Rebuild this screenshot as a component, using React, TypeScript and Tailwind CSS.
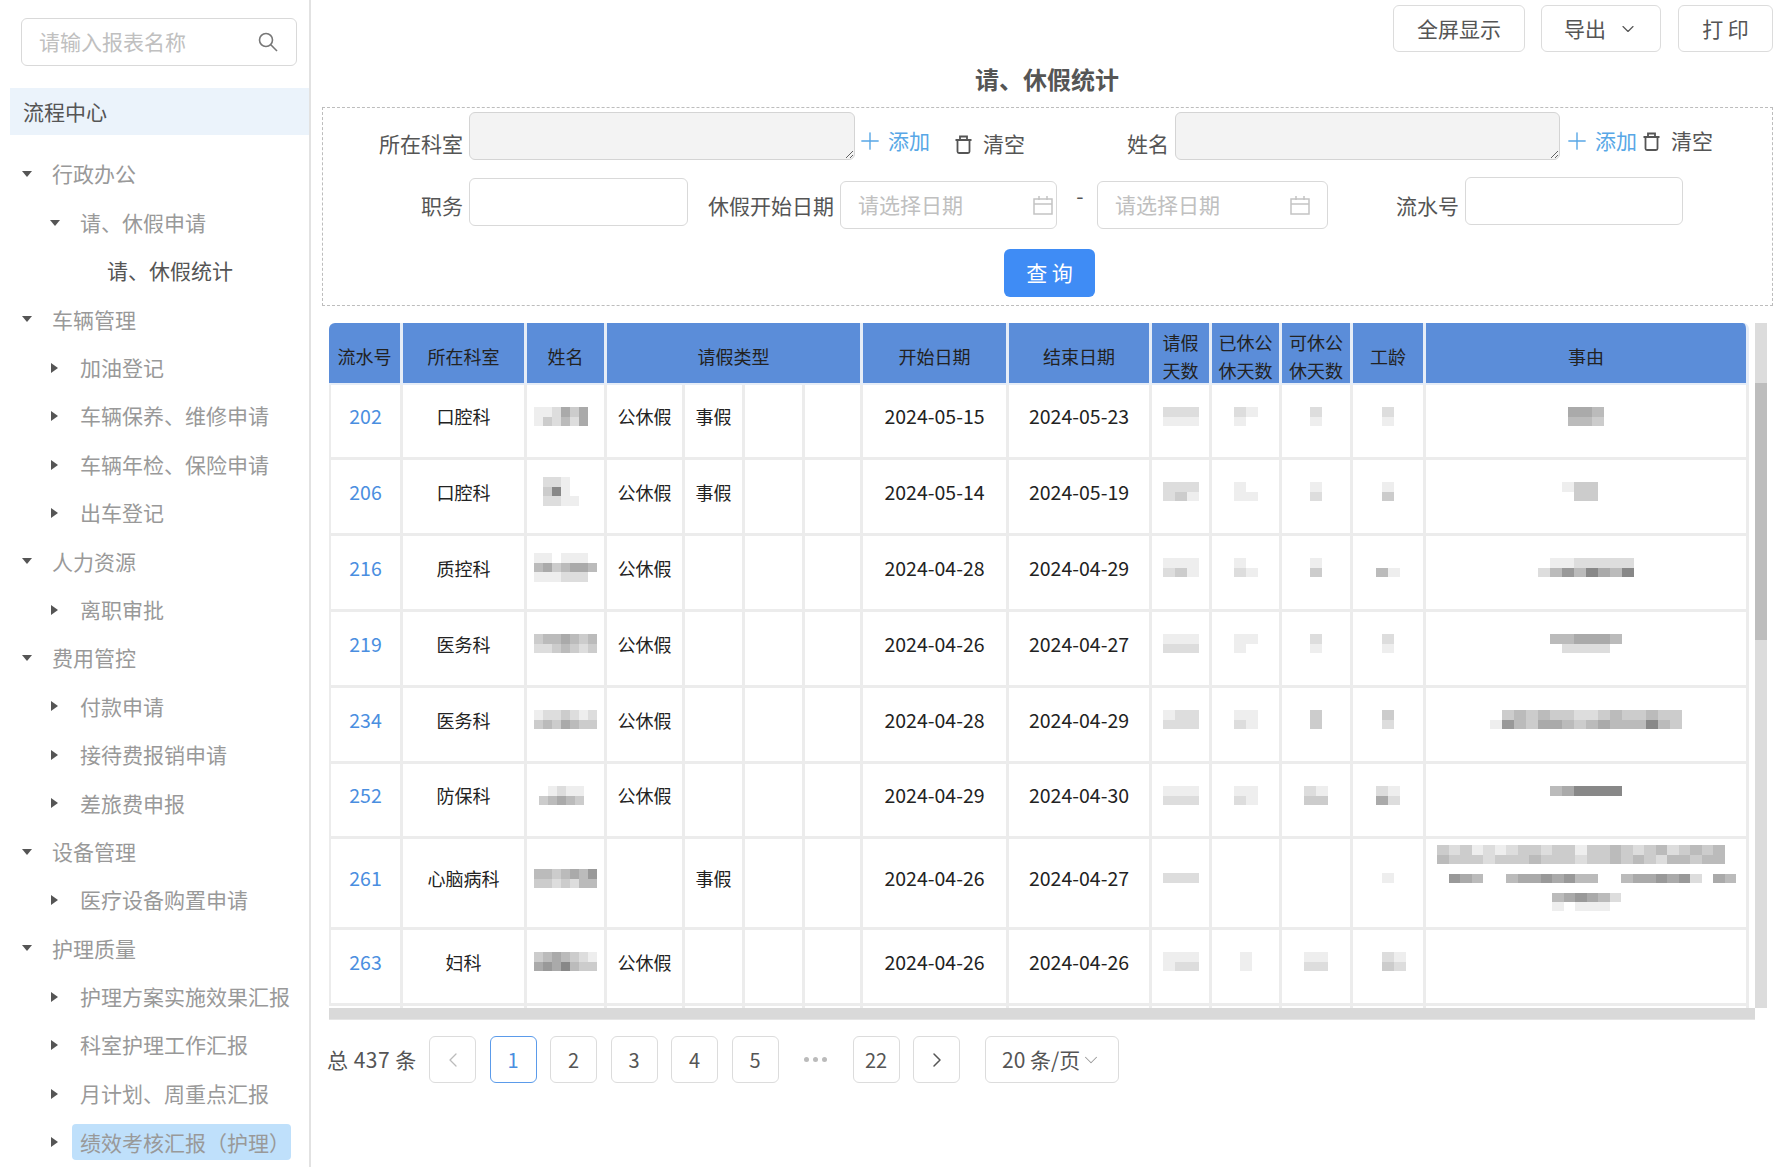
import { ChevronDown, ChevronLeft, ChevronRight, Plus } from 'lucide-react';
import type { ReactNode } from 'react';

type TreeItem = { label: string; level: 1 | 2 | 3; open?: boolean; active?: boolean; current?: boolean };

const tree: TreeItem[] = [
  { label: '行政办公', level: 1, open: true },
  { label: '请、休假申请', level: 2, open: true },
  { label: '请、休假统计', level: 3, current: true },
  { label: '车辆管理', level: 1, open: true },
  { label: '加油登记', level: 2 },
  { label: '车辆保养、维修申请', level: 2 },
  { label: '车辆年检、保险申请', level: 2 },
  { label: '出车登记', level: 2 },
  { label: '人力资源', level: 1, open: true },
  { label: '离职审批', level: 2 },
  { label: '费用管控', level: 1, open: true },
  { label: '付款申请', level: 2 },
  { label: '接待费报销申请', level: 2 },
  { label: '差旅费申报', level: 2 },
  { label: '设备管理', level: 1, open: true },
  { label: '医疗设备购置申请', level: 2 },
  { label: '护理质量', level: 1, open: true },
  { label: '护理方案实施效果汇报', level: 2 },
  { label: '科室护理工作汇报', level: 2 },
  { label: '月计划、周重点汇报', level: 2 },
  { label: '绩效考核汇报（护理）', level: 2, active: true },
];

// redacted cells: each char is a grey level, '.' is empty
type Row = {
  id: string;
  dept: string;
  name: string[];
  gong: boolean;
  shi: boolean;
  start: string;
  end: string;
  nums: string[][];
  reason: string[];
  h: string;
};

const rows: Row[] = [
  {
    id: '202', dept: '口腔科', name: ['eedacaf', 'ecdbda.'], gong: true, shi: true, start: '2024-05-15', end: '2024-05-23',
    nums: [['ddd', 'eee'], ['de', 'ef'], ['d', 'e'], ['d', 'e']], reason: ['aab', 'bbc'], h: 'h-[75px]',
  },
  {
    id: '206', dept: '口腔科', name: ['ddef.', 'c8ef.', 'ddeef'], gong: true, shi: true, start: '2024-05-14', end: '2024-05-19',
    nums: [['ddd', 'dce'], ['ef', 'ee'], ['e', 'd'], ['e', 'c']], reason: ['eccf', 'fccf'], h: 'h-[76px]',
  },
  {
    id: '216', dept: '质控科', name: ['eefeee.', 'bacbaab', 'eeeddd.'], gong: true, shi: false, start: '2024-04-28', end: '2024-04-29',
    nums: [['eee', 'dce'], ['ef', 'de'], ['e', 'c'], ['ff', 'be']], reason: ['feeddddd', 'db9b8ab8'], h: 'h-[76px]',
  },
  {
    id: '219', dept: '医务科', name: ['cbbabcb', 'ddcbcdc'], gong: true, shi: false, start: '2024-04-26', end: '2024-04-27',
    nums: [['eee', 'ddd'], ['ee', 'ef'], ['d', 'e'], ['d', 'e']], reason: ['bbaaab', 'fddddf'], h: 'h-[76px]',
  },
  {
    id: '234', dept: '医务科', name: ['eddcded', 'cbcabcc'], gong: true, shi: false, start: '2024-04-28', end: '2024-04-29',
    nums: [['edd', 'ddd'], ['ee', 'de'], ['c', 'c'], ['c', 'd']], reason: ['fcbcbccddcbccbcc', 'e9bcaabcbabbb8bc'], h: 'h-[76px]',
  },
  {
    id: '252', dept: '防保科', name: ['.edeef', 'cbabcf'], gong: true, shi: false, start: '2024-04-29', end: '2024-04-30',
    nums: [['eee', 'ddd'], ['ee', 'de'], ['de', 'cc'], ['de', 'ad']], reason: ['ba8888', 'ffffff'], h: 'h-[75px]',
  },
  {
    id: '261', dept: '心脑病科', name: ['bbcbab9', 'ccdcdbb'], gong: false, shi: true, start: '2024-04-26', end: '2024-04-27',
    nums: [['ddd'], [], [], ['e']],
    reason: [
      'cdcededccdcceccbcdcbdcbcb',
      'bcccdcccbcccdccbcbcdbbcbb',
      '.........................',
      '.9ab.fbaa9a9bbffbaa9a9dfab',
      '.........................',
      '..........ba9abd..........',
      '..........efeeef..........',
    ],
    h: 'h-[91px]',
  },
  {
    id: '263', dept: '妇科', name: ['cbabcde', 'a9a8bcc'], gong: true, shi: false, start: '2024-04-26', end: '2024-04-26',
    nums: [['eee', 'edd'], ['e', 'e'], ['ee', 'dd'], ['fde', 'fcd']], reason: [], h: 'h-[76px]',
  },
];

function Mosaic({ cells, w = 12, h = 9.5 }: { cells: string[]; w?: number; h?: number }) {
  if (cells.length === 0) return null;
  const cols = Math.max(...cells.map((r) => r.length));
  return (
    <svg width={cols * w} height={cells.length * h} shapeRendering="crispEdges" className="block">
      {cells.map((r, y) =>
        r.split('').map((c, x) =>
          c === '.' ? null : (
            <rect key={x + '-' + y} x={x * w} y={y * h} width={w} height={h} fill={'#' + c + c + c + c + c + c} />
          ),
        ),
      )}
    </svg>
  );
}

function Caret({ open }: { open?: boolean }) {
  return open ? (
    <svg width="10" height="6" viewBox="0 0 10 6" className="block">
      <path d="M0 0h10L5 6z" fill="#555" />
    </svg>
  ) : (
    <svg width="7" height="10" viewBox="0 0 7 10" className="ml-[1px] block">
      <path d="M0 0v10l7-5z" fill="#555" />
    </svg>
  );
}

function TreeRow({ item }: { item: TreeItem }) {
  const pad = item.level === 1 ? 'pl-[12px]' : item.level === 2 ? 'pl-[40px]' : 'pl-[97px]';
  return (
    <div className={'flex h-[48.4px] items-center ' + pad}>
      {item.level < 3 && (
        <span className="flex w-[30px] shrink-0 items-center">
          <Caret open={item.open} />
        </span>
      )}
      {item.active ? (
        <span className="-ml-[8px] h-[36px] w-[219px] whitespace-nowrap rounded-[4px] bg-[#bfe0fb] px-[8px] leading-[36px] text-[#999]">
          {item.label}
        </span>
      ) : (
        <span className={item.current ? 'whitespace-nowrap text-[#555]' : 'whitespace-nowrap text-[#999]'}>{item.label}</span>
      )}
    </div>
  );
}

function SearchIcon() {
  return (
    <svg width="20" height="20" viewBox="0 0 20 20" fill="none" stroke="#777" strokeWidth="1.6" className="block">
      <circle cx="8" cy="8" r="6.5" />
      <path d="M12.8 12.8L19 19" />
    </svg>
  );
}

function Sidebar() {
  return (
    <aside className="w-[311px] shrink-0 pl-[10px]">
      <div className="h-full border-r-2 border-[#e2e2e2] pt-[18px]">
        <div className="ml-[11px] flex h-[48px] w-[276px] items-center justify-between rounded-[6px] border-[1.5px] border-[#d9d9d9] pl-[17px] pr-[18px] text-[#c0c0c0]">
          <span>请输入报表名称</span>
          <SearchIcon />
        </div>
        <div className="mt-[22px] flex h-[47px] items-center bg-[#ebf3fb] pl-[13px] text-[#555]">流程中心</div>
        <div className="mt-[15px]">
          {tree.map((item) => (
            <TreeRow key={item.label} item={item} />
          ))}
        </div>
      </div>
    </aside>
  );
}

function CalendarIcon() {
  return (
    <svg width="20" height="19" viewBox="0 0 20 19" fill="none" stroke="#c4c4c4" strokeWidth="1.5" className="block">
      <path d="M1 3h18v15H1zM1 8h18M6 0v4M14 0v4" />
    </svg>
  );
}

function TrashIcon() {
  return (
    <svg width="17" height="19" viewBox="0 0 17 19" fill="none" stroke="#555" strokeWidth="1.8" className="block">
      <path d="M0.5 5h16M5 5V1.5h7V5M2.5 5v11.5a1.5 1.5 0 0 0 1.5 1.5h9a1.5 1.5 0 0 0 1.5-1.5V5" />
    </svg>
  );
}

function AddLink({ className }: { className: string }) {
  return (
    <span className={'flex items-center text-[#58a7e6] ' + className}>
      <Plus size={28} strokeWidth={1.2} className="-ml-[5px] mr-[4px]" />
      添加
    </span>
  );
}

function ClearLink({ className }: { className: string }) {
  return (
    <span className={'flex items-center gap-[11px] text-[#555] ' + className}>
      <TrashIcon />
      清空
    </span>
  );
}

function DateBox({ className }: { className: string }) {
  return (
    <div className={'flex h-[48px] items-center justify-between rounded-[6px] border-[1.5px] border-[#d9d9d9] pl-[17px] text-[#c0c0c0] ' + className}>
      <span>请选择日期</span>
      <CalendarIcon />
    </div>
  );
}

function FilterForm() {
  const area = 'block h-[48px] rounded-[6px] border-[1.5px] border-[#d4d4d4] bg-[#f3f3f3] outline-none';
  const input = 'block h-[48px] rounded-[6px] border-[1.5px] border-[#d9d9d9] bg-white outline-none';
  const label = 'flex h-[48px] items-center justify-end text-[#555]';
  return (
    <div className="ml-[11px] mt-[11px] h-[199px] w-[1451px] border border-dashed border-[#bdbdbd] pt-[4px]">
      <div className="flex items-start">
        <span className={label + ' mt-[8px] w-[140px]'}>所在科室</span>
        <textarea readOnly className={area + ' ml-[6px] w-[386px]'} />
        <AddLink className="ml-[6px] mt-[5px] h-[48px] w-[94px]" />
        <ClearLink className="mt-[8px] h-[48px] w-[72px]" />
        <span className={label + ' mt-[8px] w-[142px]'}>姓名</span>
        <textarea readOnly className={area + ' ml-[6px] w-[385px]'} />
        <AddLink className="ml-[8px] mt-[5px] h-[48px] w-[75px]" />
        <ClearLink className="mt-[5px] h-[48px]" />
      </div>
      <div className="mt-[9px] flex items-start">
        <span className={label + ' mt-[5px] w-[140px]'}>职务</span>
        <input className={input + ' ml-[6px] mt-[1px] w-[219px]'} />
        <span className={label + ' mt-[5px] w-[146px] whitespace-nowrap'}>休假开始日期</span>
        <DateBox className="ml-[6px] mt-[4px] w-[217px] pr-[3px]" />
        <span className="flex h-[37px] w-[40px] items-center justify-center pl-[6px] text-[#555]">-</span>
        <DateBox className="mt-[4px] w-[231px] pr-[17px]" />
        <span className={label + ' mt-[5px] w-[131px]'}>流水号</span>
        <input className={input + ' ml-[6px] w-[218px]'} />
      </div>
      <button className="ml-[681px] mt-[19px] block h-[48px] w-[91px] rounded-[6px] bg-[#3f8cf5] text-white">查 询</button>
    </div>
  );
}

const th = 'h-[62px] border-b-2 border-r-[3px] border-[#e6edf7] bg-[#5b8dd9] p-0 text-center font-normal text-[#222]';
const td = 'border-b-[3px] border-r-[3px] border-[#ececec] pb-[10px] text-center align-middle';

function Center({ children }: { children?: ReactNode }) {
  return <div className="flex items-center justify-center">{children}</div>;
}

// header labels sit a little below the middle of the row and may overflow it
function HeadLabel({ children }: { children: ReactNode }) {
  return (
    <div className="flex h-[60px] items-center justify-center">
      <div className="translate-y-[3px]">{children}</div>
    </div>
  );
}

function DataTable() {
  const widths = ['w-[74px]', 'w-[124px]', 'w-[80px]', 'w-[78px]', 'w-[60px]', 'w-[60px]', 'w-[58px]', 'w-[146px]', 'w-[143px]', 'w-[60px]', 'w-[70px]', 'w-[71px]', 'w-[73px]', 'w-[323px]'];
  return (
    <div className="ml-[18px] mt-[17px] w-[1448px]">
      <div className="flex h-[685px] items-start">
        <div className="h-full w-[1426px] overflow-hidden">
          <table className="w-[1420px] table-fixed border-separate border-spacing-0 text-[18px] leading-[28px] text-[#222]">
            <colgroup>
              {widths.map((w, i) => (
                <col key={i} className={w} />
              ))}
            </colgroup>
            <thead>
              <tr>
                <th className={th + ' rounded-tl-[6px]'}><HeadLabel>流水号</HeadLabel></th>
                <th className={th}><HeadLabel>所在科室</HeadLabel></th>
                <th className={th}><HeadLabel>姓名</HeadLabel></th>
                <th className={th} colSpan={4}><HeadLabel>请假类型</HeadLabel></th>
                <th className={th}><HeadLabel>开始日期</HeadLabel></th>
                <th className={th}><HeadLabel>结束日期</HeadLabel></th>
                <th className={th}><HeadLabel>请假<br />天数</HeadLabel></th>
                <th className={th}><HeadLabel>已休公<br />休天数</HeadLabel></th>
                <th className={th}><HeadLabel>可休公<br />休天数</HeadLabel></th>
                <th className={th}><HeadLabel>工龄</HeadLabel></th>
                <th className={th + ' rounded-tr-[6px] border-r-0'}><HeadLabel>事由</HeadLabel></th>
              </tr>
            </thead>
            <tbody>
              {rows.map((r) => (
                <tr key={r.id} className={r.h}>
                  <td className={td + ' border-l-2 text-[19.5px] text-[#4a8ee0]'}>{r.id}</td>
                  <td className={td}>{r.dept}</td>
                  <td className={td}>
                    <Center><Mosaic cells={r.name} w={9} h={9.5} /></Center>
                  </td>
                  <td className={td}>{r.gong ? '公休假' : ''}</td>
                  <td className={td}>{r.shi ? '事假' : ''}</td>
                  <td className={td} />
                  <td className={td} />
                  <td className={td + ' text-[19.5px]'}>{r.start}</td>
                  <td className={td + ' text-[19.5px]'}>{r.end}</td>
                  {r.nums.map((n, i) => (
                    <td key={i} className={td}>
                      <Center><Mosaic cells={n} /></Center>
                    </td>
                  ))}
                  <td className={td + ' border-r-0'}>
                    <Center><Mosaic cells={r.reason} w={r.reason.length > 4 ? 11.5 : 12} /></Center>
                  </td>
                </tr>
              ))}
              <tr className="h-[40px]">
                {widths.map((_, i) => (
                  <td key={i} className={td} />
                ))}
              </tr>
            </tbody>
          </table>
        </div>
        <div className="ml-[-0.5px] h-full w-[12px] bg-[#dcdcdc]">
          <div className="mt-[60px] h-[257px] bg-[#bdbdbd]" />
        </div>
      </div>
      <div className="h-[12px] w-[1426px] border-b border-[#e5e5e5] bg-[#d9d9d9]" />
    </div>
  );
}

function PageButton({ children, active }: { children: ReactNode; active?: boolean }) {
  return (
    <span
      className={
        'flex h-[47px] w-[47px] items-center justify-center rounded-[6px] border-[1.5px] ' +
        (active ? 'border-[#5b9bea] text-[#4a8ee0]' : 'border-[#dcdcdc] text-[#555]')
      }
    >
      {children}
    </span>
  );
}

function Pagination() {
  return (
    <div className="ml-[16px] mt-[16px] flex h-[47px] items-center text-[20px] text-[#555]">
      <span className="w-[102px] whitespace-nowrap text-[21px] tracking-[0.5px]">总 437 条</span>
      <div className="flex gap-[13.5px]">
        <PageButton><ChevronLeft size={24} strokeWidth={1.3} className="text-[#bbb]" /></PageButton>
        <PageButton active>1</PageButton>
        <PageButton>2</PageButton>
        <PageButton>3</PageButton>
        <PageButton>4</PageButton>
        <PageButton>5</PageButton>
      </div>
      <span className="flex w-[74px] items-center justify-center gap-[4px]">
        <span className="h-[5px] w-[5px] rounded-full bg-[#bbb]" />
        <span className="h-[5px] w-[5px] rounded-full bg-[#bbb]" />
        <span className="h-[5px] w-[5px] rounded-full bg-[#bbb]" />
      </span>
      <span className="flex gap-[13.5px]">
        <PageButton>22</PageButton>
        <PageButton><ChevronRight size={24} strokeWidth={1.5} /></PageButton>
      </span>
      <span className="ml-[25px] flex h-[47px] w-[134px] items-center whitespace-nowrap rounded-[6px] border-[1.5px] border-[#dcdcdc] pl-[16px] text-[21px]">
        20 条/页
        <ChevronDown size={22} strokeWidth={1.1} className="text-[#999]" />
      </span>
    </div>
  );
}

export default function App() {
  const tool = 'flex h-[47px] items-center justify-center rounded-[6px] border-[1.5px] border-[#dcdcdc] text-[#555]';
  return (
    <div className="flex h-[1167px] w-[1777px] overflow-hidden bg-white font-['Noto_Sans_CJK_SC','Noto_Sans',sans-serif] text-[21px]">
      <Sidebar />
      <main className="min-w-0 flex-1 pt-[5px]">
        <div className="flex justify-end pr-[4px]">
          <span className={tool + ' w-[132px]'}>全屏显示</span>
          <span className={tool + ' ml-[16px] w-[120px] gap-[12px]'}>
            导出
            <ChevronDown size={20} strokeWidth={1.4} />
          </span>
          <span className={tool + ' ml-[17px] w-[95px]'}>打 印</span>
        </div>
        <h1 className="mt-[11px] h-[33px] pl-[6px] text-center text-[24px] font-bold leading-[32px] text-[#555]">请、休假统计</h1>
        <FilterForm />
        <DataTable />
        <Pagination />
      </main>
    </div>
  );
}
